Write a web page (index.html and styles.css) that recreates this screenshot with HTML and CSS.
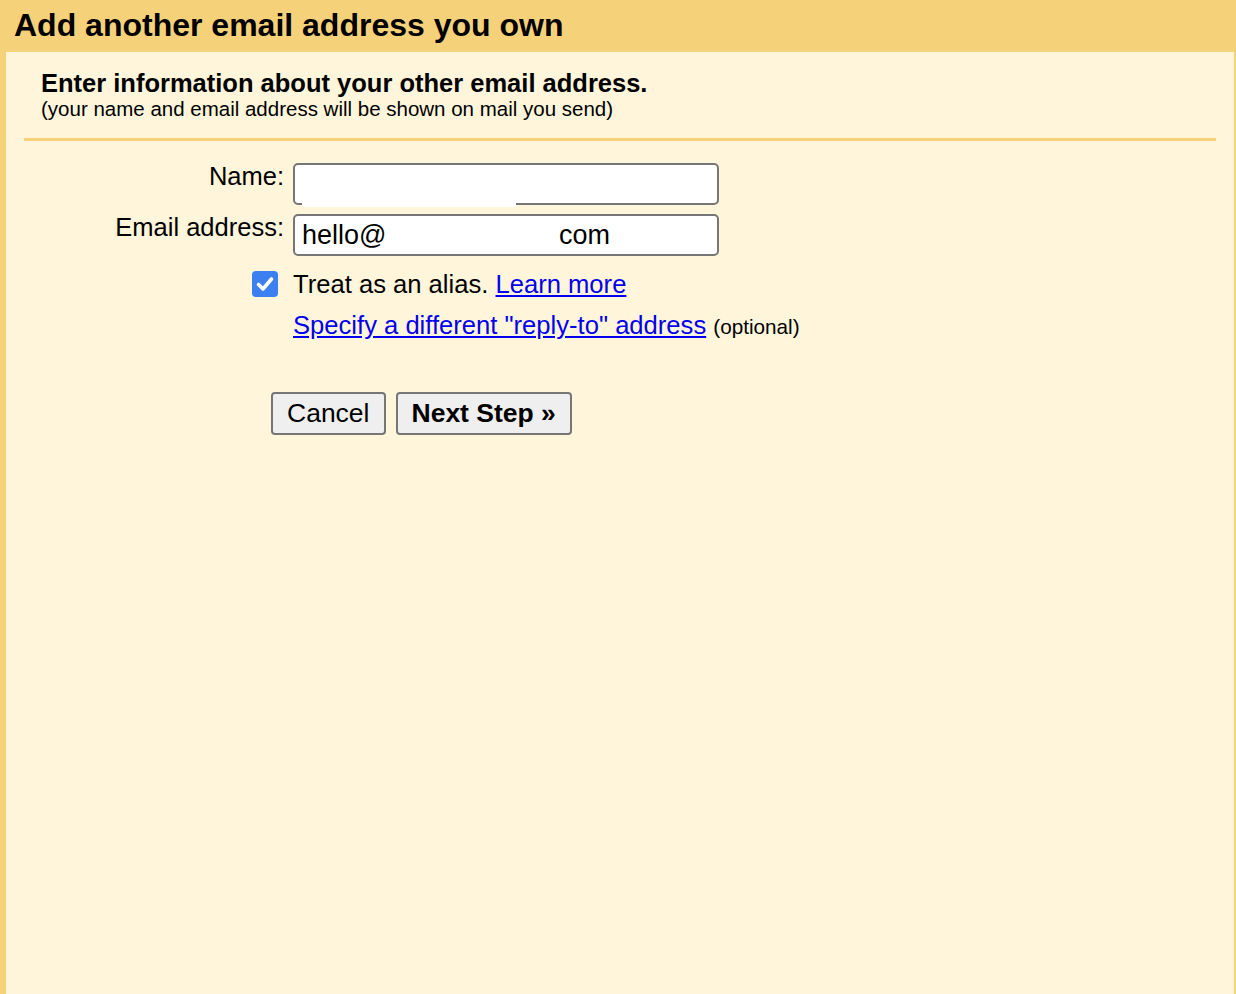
FILE: index.html
```html
<!DOCTYPE html>
<html>
<head>
<meta charset="utf-8">
<link rel="stylesheet" href="styles.css">
</head>
<body>
<div class="page">
  <div class="header"><h1 class="title">Add another email address you own</h1></div>
  <div class="panel">
    <div class="intro">
      <div class="intro-head">Enter information about your other email address.</div>
      <div class="intro-sub">(your name and email address will be shown on mail you send)</div>
    </div>
    <div class="divider"></div>
    <div class="form">
      <div class="row">
        <label class="label">Name:</label>
        <div class="field">
          <input class="input" type="text" value="">
          <div class="redact"></div>
        </div>
      </div>
      <div class="row">
        <label class="label">Email address:</label>
        <div class="field">
          <input class="input" type="text" value="hello@                       com">
        </div>
      </div>
      <div class="row row-check">
        <div class="label check-cell">
          <span class="checkbox"><svg viewBox="0 0 26 26" width="26" height="26"><path d="M6.5 13.5 L11 18 L19.5 8" fill="none" stroke="#fff" stroke-width="3.6" stroke-linecap="round" stroke-linejoin="round"/></svg></span>
        </div>
        <div class="field text">Treat as an alias. <a href="#" class="link">Learn more</a></div>
      </div>
      <div class="row row-reply">
        <div class="label"></div>
        <div class="field text"><a href="#" class="link">Specify a different "reply-to" address</a> <span class="optional">(optional)</span></div>
      </div>
    </div>
    <div class="buttons">
      <button class="btn">Cancel</button>
      <button class="btn btn-bold">Next Step »</button>
    </div>
  </div>
</div>
</body>
</html>
```

FILE: styles.css
```css
html, body {
  margin: 0;
  padding: 0;
}
body {
  font-family: "Liberation Sans", Arial, sans-serif;
  color: #000;
  background: #f5d27a;
}
.page {
  width: 1236px;
  height: 994px;
  display: flex;
  flex-direction: column;
  background: #f5d27a;
  overflow: hidden;
}
.header {
  height: 52px;
  padding-left: 14px;
  box-sizing: border-box;
  display: flex;
  align-items: center;
}
.title {
  margin: 0;
  font-size: 32px;
  font-weight: bold;
  line-height: 1;
  padding-bottom: 2px;
}
.panel {
  flex: 1;
  margin: 0 2px 0 6px;
  background: #fef5da;
}
.intro {
  padding: 16px 0 0 35px;
}
.intro-head {
  font-size: 25.5px;
  font-weight: bold;
  line-height: 30px;
}
.intro-sub {
  font-size: 20.5px;
  line-height: 22px;
}
.divider {
  margin: 18px 0 0 18px;
  width: 1192px;
  height: 3px;
  background: #f5d27a;
}
.form {
  margin-top: 22px;
  display: flex;
  flex-direction: column;
  gap: 9px;
}
.row {
  display: flex;
  align-items: flex-start;
}
.label {
  width: 278px;
  text-align: right;
  font-size: 25.5px;
  line-height: 27px;
  flex-shrink: 0;
}
.field {
  margin-left: 9px;
  position: relative;
}
.input {
  width: 426px;
  height: 42px;
  box-sizing: border-box;
  border: 2px solid #767676;
  border-radius: 5px;
  background: #fff;
  font-family: "Liberation Sans", Arial, sans-serif;
  font-size: 27px;
  padding: 0 7px;
  color: #000;
  display: block;
  white-space: pre;
}
.redact {
  position: absolute;
  left: 9px;
  top: 17px;
  width: 214px;
  height: 27px;
  background: #fff;
}
.row-check {
  margin-top: 4px;
  align-items: center;
}
.check-cell {
  display: flex;
  justify-content: flex-end;
}
.checkbox {
  width: 26px;
  height: 26px;
  border-radius: 4px;
  background: #3b7ff0;
  display: block;
  position: relative;
  left: -6px;
}
.checkbox svg {
  display: block;
}
.text {
  font-size: 25.6px;
  line-height: 30px;
}
.link {
  color: #0000ee;
  text-decoration: underline;
}
.optional {
  font-size: 20.7px;
}
.row-reply {
  margin-top: 2px;
}
.buttons {
  margin: 50px 0 0 265px;
  display: flex;
  gap: 10px;
}
.btn {
  height: 43px;
  box-sizing: border-box;
  border: 2px solid #767676;
  border-radius: 4px;
  background: #efefef;
  font-family: "Liberation Sans", Arial, sans-serif;
  font-size: 26.5px;
  padding: 0 14px;
  color: #000;
}
.btn-bold {
  font-weight: bold;
}
```
